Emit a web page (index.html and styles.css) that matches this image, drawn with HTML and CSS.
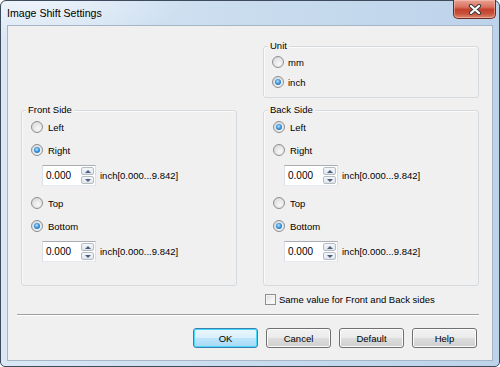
FILE: index.html
```html
<!DOCTYPE html>
<html>
<head>
<meta charset="utf-8">
<link rel="stylesheet" href="styles.css">
</head>
<body>
<div class="window">
  <div class="titlebar">
    <span class="title">Image Shift Settings</span>
    <div class="close">
      <svg width="14" height="11" viewBox="0 0 14 11">
        <path d="M3 2 L11 9 M11 2 L3 9" stroke="#3b3b3b" stroke-width="4.2" stroke-linecap="round"/>
        <path d="M3 2 L11 9 M11 2 L3 9" stroke="#ffffff" stroke-width="2.2" stroke-linecap="round"/>
      </svg>
    </div>
  </div>
  <div class="client">
    <div class="grid">
      <div class="spacer"></div>
      <div class="group unit">
        <span class="legend">Unit</span>
        <div class="opt"><span class="radio"></span><span>mm</span></div>
        <div class="opt"><span class="radio on"></span><span>inch</span></div>
      </div>
      <div class="group side">
        <span class="legend">Front Side</span>
        <div class="opt"><span class="radio"></span><span>Left</span></div>
        <div class="opt"><span class="radio on"></span><span>Right</span></div>
        <div class="spinrow">
          <div class="spin"><span class="val">0.000</span><div class="arrows"><span class="ab"><i class="up"></i></span><span class="ab"><i class="dn"></i></span></div></div>
          <span class="range">inch[0.000...9.842]</span>
        </div>
        <div class="opt"><span class="radio"></span><span>Top</span></div>
        <div class="opt"><span class="radio on"></span><span>Bottom</span></div>
        <div class="spinrow">
          <div class="spin"><span class="val">0.000</span><div class="arrows"><span class="ab"><i class="up"></i></span><span class="ab"><i class="dn"></i></span></div></div>
          <span class="range">inch[0.000...9.842]</span>
        </div>
      </div>
      <div class="group side">
        <span class="legend">Back Side</span>
        <div class="opt"><span class="radio on"></span><span>Left</span></div>
        <div class="opt"><span class="radio"></span><span>Right</span></div>
        <div class="spinrow">
          <div class="spin"><span class="val">0.000</span><div class="arrows"><span class="ab"><i class="up"></i></span><span class="ab"><i class="dn"></i></span></div></div>
          <span class="range">inch[0.000...9.842]</span>
        </div>
        <div class="opt"><span class="radio"></span><span>Top</span></div>
        <div class="opt"><span class="radio on"></span><span>Bottom</span></div>
        <div class="spinrow">
          <div class="spin"><span class="val">0.000</span><div class="arrows"><span class="ab"><i class="up"></i></span><span class="ab"><i class="dn"></i></span></div></div>
          <span class="range">inch[0.000...9.842]</span>
        </div>
      </div>
      <div class="spacer"></div>
      <div class="check"><span class="box"></span><span>Same value for Front and Back sides</span></div>
    </div>
    <div class="sep"></div>
    <div class="buttons">
      <div class="btn default">OK</div>
      <div class="btn">Cancel</div>
      <div class="btn">Default</div>
      <div class="btn">Help</div>
    </div>
  </div>
</div>
</body>
</html>
```

FILE: styles.css
```css
* { box-sizing: border-box; }
html, body { margin: 0; padding: 0; background: #ffffff; }
body {
  font-family: "Liberation Sans", Arial, sans-serif;
  font-size: 9.5px;
  color: #000;
}
.window {
  width: 500px;
  height: 367px;
  border: 1px solid #3d4b5d;
  border-radius: 6px 6px 5px 5px;
  background:
    radial-gradient(ellipse 160px 40px at 30px 0px, rgba(255,255,255,0.55), rgba(255,255,255,0) 100%),
    linear-gradient(to right, #dbe7f5 0%, #cddff0 35%, #bdd3ea 100%);
  padding: 0 6px 5px 6px;
  display: flex;
  flex-direction: column;
}
.titlebar {
  height: 24px;
  display: flex;
  align-items: flex-start;
}
.title {
  font-size: 10.6px;
  line-height: 12px;
  margin-top: 6px;
  color: #000;
}
.close {
  margin-left: auto;
  margin-right: -3px;
  margin-top: -1px;
  width: 43px;
  height: 19px;
  border: 1px solid #6b2a20;
  border-top: none;
  border-radius: 0 0 5px 5px;
  background: linear-gradient(to bottom, #e8a394 0%, #d9705d 40%, #c3412d 52%, #c9503a 75%, #dc8770 100%);
  display: flex;
  align-items: center;
  justify-content: center;
  box-shadow: inset 0 0 0 1px rgba(255,210,200,0.45);
}
.close svg { display: block; }
.client {
  flex: 1;
  background: #f0f0f0;
  border: 1px solid #a7b6c7;
  padding: 20px 0 0 0;
  display: flex;
  flex-direction: column;
}
.grid {
  display: grid;
  grid-template-columns: 216px 216px;
  column-gap: 26px;
  row-gap: 12px;
  margin-left: 13px;
}
.group {
  position: relative;
  border: 1px solid #d5dadf;
  border-radius: 3px;
  box-shadow: inset 1px 1px 0 #fbfbfb;
  display: flex;
  flex-direction: column;
}
.legend {
  position: absolute;
  top: -7px;
  left: 4px;
  padding: 0 2px;
  line-height: 12px;
  background: #f0f0f0;
}
.unit {
  height: 52px;
  padding: 8px 0 0 8px;
  gap: 6px;
}
.side {
  height: 176px;
  padding: 9px 0 0 9px;
  gap: 9px;
}
.opt {
  display: flex;
  align-items: center;
  height: 14px;
  gap: 4px;
}
.side .opt { gap: 5px; }
.radio {
  width: 12px;
  height: 12px;
  border-radius: 50%;
  border: 1px solid #8c8f93;
  background: radial-gradient(circle at 60% 65%, #f8f8f8 0%, #e4e4e4 55%, #cfcfcf 100%);
  display: flex;
  align-items: center;
  justify-content: center;
  flex: none;
}
.radio.on::after {
  content: "";
  width: 6px;
  height: 6px;
  border-radius: 50%;
  background: radial-gradient(circle at 45% 40%, #bfe6ff 0%, #3b97e0 45%, #10508f 100%);
}
.spinrow {
  display: flex;
  align-items: center;
  height: 21px;
  margin-left: 11px;
  margin-top: -1px;
  margin-bottom: 1px;
}
.spin {
  width: 54px;
  height: 21px;
  background: #fff;
  border: 1px solid #dbdfe6;
  border-top-color: #abadb3;
  border-bottom-color: #e3e9ef;
  display: flex;
  align-items: center;
}
.val {
  flex: 1;
  padding-left: 3px;
  font-size: 10px;
}
.arrows {
  width: 13px;
  height: 17px;
  margin-right: 1px;
  display: flex;
  flex-direction: column;
  gap: 1px;
}
.ab {
  flex: 1;
  border: 1px solid #b5bcc6;
  border-radius: 2px;
  background: linear-gradient(to bottom, #f5f7f9, #e1e5ea);
  display: flex;
  align-items: center;
  justify-content: center;
}
.up {
  width: 0; height: 0;
  border-left: 3px solid transparent;
  border-right: 3px solid transparent;
  border-bottom: 3px solid #4a5f82;
}
.dn {
  width: 0; height: 0;
  border-left: 3px solid transparent;
  border-right: 3px solid transparent;
  border-top: 3px solid #4a5f82;
}
.range {
  margin-left: 4px;
}
.check {
  display: flex;
  align-items: center;
  gap: 3px;
  height: 13px;
  margin-top: -5px;
  margin-left: 2px;
}
.box {
  width: 11px;
  height: 11px;
  border: 1px solid #8e8f8f;
  background: linear-gradient(135deg, #dcdcdc 0%, #f4f4f4 60%, #ffffff 100%);
  box-shadow: inset 0 0 0 1px #f4f4f4;
}
.sep {
  margin: 8px 0 0 9px;
  width: 462px;
  border-top: 1px solid #a0a0a0;
  border-bottom: 1px solid #ffffff;
}
.buttons {
  display: flex;
  justify-content: flex-end;
  gap: 8px;
  margin-top: 12px;
  margin-right: 15px;
}
.btn {
  width: 65px;
  height: 20px;
  border: 1px solid #707070;
  border-radius: 3px;
  background: linear-gradient(to bottom, #f2f2f2 0%, #ebebeb 49%, #dddddd 50%, #cfcfcf 100%);
  box-shadow: inset 0 0 0 1px #fcfcfc;
  display: flex;
  align-items: center;
  justify-content: center;
  font-size: 9.5px;
}
.btn.default {
  border-color: #3c7fb1;
  background: linear-gradient(to bottom, #eaf6fd 0%, #d9f0fc 49%, #bee6fd 50%, #a7d9f5 100%);
  box-shadow: inset 0 0 0 1px #48d8fb;
}
```
